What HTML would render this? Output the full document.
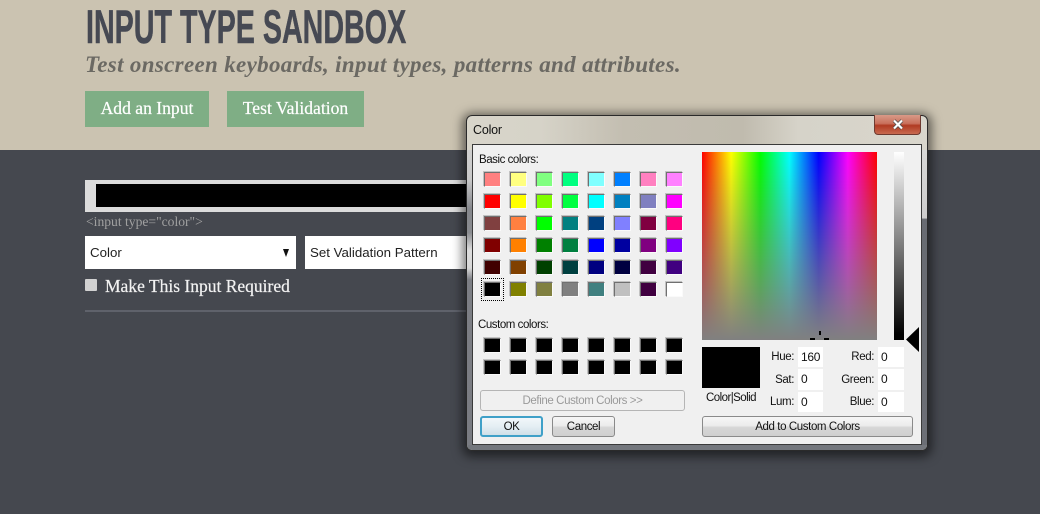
<!DOCTYPE html>
<html><head><meta charset="utf-8"><style>
html,body{margin:0;padding:0}
body{width:1040px;height:514px;position:relative;overflow:hidden;background:#45484f;font-family:"Liberation Serif",serif}
.a{position:absolute}
.w{font-family:"Liberation Sans",sans-serif;font-size:11.5px;color:#111;white-space:nowrap;letter-spacing:-.45px}
.grid{position:absolute;display:grid;grid-template-columns:repeat(8,17px);grid-auto-rows:15px;column-gap:9px;row-gap:7px}
.grid i{display:block;box-sizing:border-box;border:1px solid #fafafa;border-top-color:#707070;border-left-color:#707070;box-shadow:-1px -1px 0 #c2c2c2}
.f{position:absolute;background:#fff;width:25px;height:20px;box-sizing:border-box;padding:3px 0 0 3px;font:12px "Liberation Sans",sans-serif;color:#111;letter-spacing:-.3px}
.l{position:absolute;font:11.5px "Liberation Sans",sans-serif;color:#111;text-align:right;letter-spacing:-.4px;line-height:14px}
.b{position:absolute;box-sizing:border-box;border:1px solid #8a8a8a;border-radius:3px;background:linear-gradient(#f6f6f6 0,#ececec 45%,#d6d6d6 55%,#cfcfcf 100%);text-align:center;font:11.5px "Liberation Sans",sans-serif;color:#111;letter-spacing:-.4px;line-height:21px}
</style></head><body>
<div class="a" style="left:0;top:0;width:1040px;height:150px;background:#cbc3b1"></div>
<div class="a" style="left:86px;top:0;font:bold 47px/54px 'Liberation Sans',sans-serif;color:#464953;-webkit-text-stroke:.5px #464953;transform:scaleX(.61);transform-origin:0 0;white-space:nowrap">INPUT TYPE SANDBOX</div>
<div class="a" style="left:85px;top:51px;font:italic bold 23px/28px 'Liberation Serif',serif;color:#6b6963;white-space:nowrap;letter-spacing:.33px">Test onscreen keyboards, input types, patterns and attributes.</div>
<div class="a" style="left:85px;top:91px;width:124px;height:36px;background:#7fae85;color:#fff;font-size:17.6px;line-height:35px;text-align:center;-webkit-text-stroke:.2px #fff">Add an Input</div>
<div class="a" style="left:227px;top:91px;width:137px;height:36px;background:#7fae85;color:#fff;font-size:17.6px;line-height:35px;text-align:center;-webkit-text-stroke:.2px #fff">Test Validation</div>

<div class="a" style="left:85px;top:180px;width:390px;height:32px;background:#dcdcdc"></div>
<div class="a" style="left:96px;top:184px;width:380px;height:23px;background:#000"></div>
<div class="a" style="left:86px;top:214px;font-size:13.6px;line-height:16px;color:#a0a0a0;white-space:nowrap">&lt;input type="color"&gt;</div>
<div class="a" style="left:85px;top:236px;width:211px;height:33px;background:#fff"></div>
<div class="a" style="left:90px;top:245px;font:13.3px/16px 'Liberation Sans',sans-serif;color:#222">Color</div>
<div class="a" style="left:283px;top:249px;width:0;height:0;border-left:3.5px solid transparent;border-right:3.5px solid transparent;border-top:8px solid #111"></div>
<div class="a" style="left:305px;top:236px;width:170px;height:33px;background:#fff"></div>
<div class="a" style="left:310px;top:245px;font:13.3px/16px 'Liberation Sans',sans-serif;color:#222;white-space:nowrap">Set Validation Pattern</div>
<div class="a" style="left:85px;top:279px;width:12px;height:12px;background:#d2d2d2;border-radius:1px"></div>
<div class="a" style="left:105px;top:276px;font-size:17.5px;line-height:20px;color:#f2f2f2;white-space:nowrap;-webkit-text-stroke:.2px #f2f2f2">Make This Input Required</div>
<div class="a" style="left:85px;top:310px;width:385px;height:2px;background:#5f626b"></div>

<!-- dialog -->
<div class="a" style="left:466px;top:115px;width:462px;height:336px;box-sizing:border-box;border:1px solid #2a2a2a;border-radius:6px;box-shadow:0 2px 10px 4px rgba(0,0,0,.5);background:linear-gradient(90deg,#d8d5ca 0,#d6d3c8 16%,#c3beb1 34%,#c0bbae 60%,#d6d3c9 72%,#d9d6cc 100%)"></div>
<div class="a" style="left:467px;top:150px;width:5px;height:295px;background:linear-gradient(#cfcfcf 0,#c8c8c8 10%,#85878c 20%,#8a8c90 28%,#dcdcdc 34%,#d8d8d8 40%,#7c7e84 44%,#7a7c82 100%)"></div>
<div class="a" style="left:922px;top:150px;width:5px;height:295px;background:linear-gradient(#d8d8d8 0,#cdcdcd 23%,#686b72 23.5%,#6c6f76 100%)"></div>
<div class="a" style="left:467px;top:445px;width:460px;height:5px;background:#74777d;border-radius:0 0 5px 5px"></div>
<div class="a" style="left:473px;top:123px;font:12.5px/14px 'Liberation Sans',sans-serif;color:#111;letter-spacing:-.2px">Color</div>
<div class="a" style="left:874px;top:115px;width:47px;height:20px;box-sizing:border-box;border:1px solid #6e3a30;border-top:0;border-radius:0 0 4px 4px;background:linear-gradient(#d99a88 0,#c9705c 45%,#b03a22 55%,#c86a50 100%)"></div>
<svg class="a" style="left:892px;top:119px" width="12" height="11" viewBox="0 0 12 11"><path d="M2 1.5L10 9.5M10 1.5L2 9.5" stroke="#4a4a4a" stroke-width="3.6" fill="none"/><path d="M2 1.5L10 9.5M10 1.5L2 9.5" stroke="#fff" stroke-width="2.2" fill="none"/></svg>
<div class="a" style="left:472px;top:144px;width:450px;height:301px;box-sizing:border-box;border:1px solid #3a3a3a;background:#f0f0f0"></div>

<div class="a w" style="left:479px;top:154px;">Basic colors:</div>
<div class="grid" style="left:484px;top:172px">
<i style="background:#ff8080"></i><i style="background:#ffff80"></i><i style="background:#80ff80"></i><i style="background:#00ff80"></i><i style="background:#80ffff"></i><i style="background:#0080ff"></i><i style="background:#ff80c0"></i><i style="background:#ff80ff"></i>
<i style="background:#f00"></i><i style="background:#ff0"></i><i style="background:#80ff00"></i><i style="background:#00ff40"></i><i style="background:#0ff"></i><i style="background:#0080c0"></i><i style="background:#8080c0"></i><i style="background:#f0f"></i>
<i style="background:#804040"></i><i style="background:#ff8040"></i><i style="background:#0f0"></i><i style="background:#008080"></i><i style="background:#004080"></i><i style="background:#8080ff"></i><i style="background:#800040"></i><i style="background:#ff0080"></i>
<i style="background:#800000"></i><i style="background:#ff8000"></i><i style="background:#008000"></i><i style="background:#008040"></i><i style="background:#00f"></i><i style="background:#0000a0"></i><i style="background:#800080"></i><i style="background:#8000ff"></i>
<i style="background:#400000"></i><i style="background:#804000"></i><i style="background:#004000"></i><i style="background:#004040"></i><i style="background:#000080"></i><i style="background:#000040"></i><i style="background:#400040"></i><i style="background:#400080"></i>
<i style="background:#000"></i><i style="background:#808000"></i><i style="background:#808040"></i><i style="background:#808080"></i><i style="background:#408080"></i><i style="background:#c0c0c0"></i><i style="background:#400040"></i><i style="background:#fff"></i>
</div>
<div class="a" style="left:481px;top:278px;width:23px;height:23px;box-sizing:border-box;border:1px dotted #000"></div>
<div class="a w" style="left:478px;top:319px;">Custom colors:</div>
<div class="grid" style="left:484px;top:338px">
<i style="background:#000"></i><i style="background:#000"></i><i style="background:#000"></i><i style="background:#000"></i><i style="background:#000"></i><i style="background:#000"></i><i style="background:#000"></i><i style="background:#000"></i>
<i style="background:#000"></i><i style="background:#000"></i><i style="background:#000"></i><i style="background:#000"></i><i style="background:#000"></i><i style="background:#000"></i><i style="background:#000"></i><i style="background:#000"></i>
</div>
<div class="b" style="left:480px;top:390px;width:205px;height:21px;background:#f0f0f0;border-color:#b5b5b5;color:#9a9a9a">Define Custom Colors &gt;&gt;</div>
<div class="b" style="left:480px;top:416px;width:63px;height:21px;border:2px solid #3fa0c8;line-height:19px;background:linear-gradient(#f2f7fa,#e4eef3 50%,#cfdfe8)">OK</div>
<div class="b" style="left:552px;top:416px;width:63px;height:21px">Cancel</div>
<div class="b" style="left:702px;top:416px;width:211px;height:21px">Add to Custom Colors</div>

<div class="a" style="left:702px;top:152px;width:175px;height:188px;background:linear-gradient(rgba(128,128,128,0),#808080),linear-gradient(90deg,#f00,#ff0 16.67%,#0f0 33.33%,#0ff 50%,#00f 66.67%,#f0f 83.33%,#f00)"></div>
<div class="a" style="left:819px;top:331px;width:2px;height:4px;background:#000"></div>
<div class="a" style="left:810px;top:338px;width:5px;height:2px;background:#000"></div>
<div class="a" style="left:824px;top:338px;width:5px;height:2px;background:#000"></div>
<div class="a" style="left:894px;top:152px;width:10px;height:188px;background:linear-gradient(#fff,#000 97%)"></div>
<svg class="a" style="left:906px;top:326px" width="14" height="27" viewBox="0 0 14 27"><path d="M0 13.5L13 1V26Z" fill="#000"/></svg>
<div class="a" style="left:702px;top:347px;width:58px;height:41px;background:#000"></div>
<div class="a w" style="left:702px;top:392px;width:58px;text-align:center;letter-spacing:-.55px">Color|Solid</div>
<div class="l" style="left:760px;width:34px;top:350px">Hue:</div><div class="f" style="left:798px;top:347px">160</div>
<div class="l" style="left:760px;width:34px;top:373px">Sat:</div><div class="f" style="left:798px;top:369px;height:21px">0</div>
<div class="l" style="left:760px;width:34px;top:395px">Lum:</div><div class="f" style="left:798px;top:392px">0</div>
<div class="l" style="left:830px;width:44px;top:350px">Red:</div><div class="f" style="left:878px;top:347px;width:26px">0</div>
<div class="l" style="left:830px;width:44px;top:373px">Green:</div><div class="f" style="left:878px;top:369px;width:26px;height:21px">0</div>
<div class="l" style="left:830px;width:44px;top:395px">Blue:</div><div class="f" style="left:878px;top:392px;width:26px">0</div>
</body></html>
